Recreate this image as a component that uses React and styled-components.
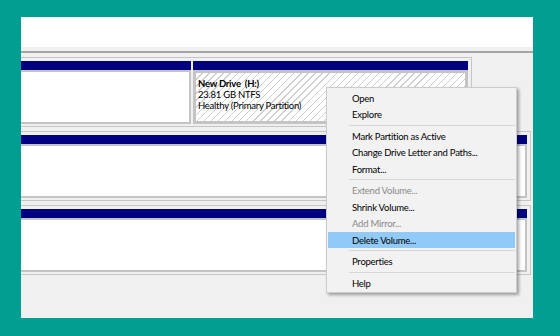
import styled, { createGlobalStyle } from "styled-components";

const GlobalStyle = createGlobalStyle`
  html, body {
    margin: 0;
    padding: 0;
    background: #009f91;
  }
  body {
    font-family: Lato, "Noto Sans", sans-serif;
  }
`;

const Stage = styled.div`
  width: 560px;
  height: 336px;
  box-sizing: border-box;
  padding: 17px 0 0 21px;
  background: #009f91;
`;

const Window = styled.div`
  position: relative;
  width: 512px;
  height: 301px;
  background: #f0f0f0;
  display: flex;
  flex-direction: column;
  overflow: hidden;
`;

const TopPane = styled.div`
  height: 30px;
  background: #ffffff;
`;

const Splitter = styled.div`
  height: 4px;
  background: #f0f0f0;
  border-bottom: 2px solid #a5a5a5;
`;

const DiskRow = styled.div`
  padding: 4px 2px 0 0;
`;

const DiskBox = styled.div`
  width: ${(p) => p.$width || "auto"};
  box-sizing: border-box;
  border: 1px solid #c6c6c6;
  border-left: none;
  padding: 3px 3px 2px 0;
  display: flex;
  gap: 2px;
`;

const Partition = styled.div`
  flex: ${(p) => (p.$width ? `0 0 ${p.$width}` : "1")};
  display: flex;
  flex-direction: column;
`;

const Bar = styled.div`
  height: 9px;
  background: #000080;
`;

const Body = styled.div`
  height: 54px;
  box-sizing: border-box;
  border: ${(p) => (p.$selected ? "3px solid #c4c4c4" : "2px solid #c4c4c4")};
  border-left-width: ${(p) => (p.$cut ? "0" : p.$selected ? "3px" : "2px")};
  background: ${(p) =>
    p.$selected
      ? "repeating-linear-gradient(135deg, #ffffff 0 4px, #cfcfcf 4px 5px)"
      : "#ffffff"};
  padding: 5px 2px 2px;
  font-size: 9.5px;
  letter-spacing: -0.25px;
  line-height: 11px;
  color: #000;
`;

const Label = styled.div`
  white-space: pre;
  font-weight: ${(p) => (p.$bold ? 700 : 400)};
`;

const Menu = styled.div`
  position: absolute;
  left: 305px;
  top: 70px;
  width: 191px;
  box-sizing: border-box;
  background: #f2f2f2;
  border: 1px solid #cccccc;
  padding: 1.5px 1px 1px;
  box-shadow: 2px 2px 3px rgba(0, 0, 0, 0.35);
  font-size: 9.5px;
  letter-spacing: -0.25px;
`;

const Item = styled.div`
  height: 16.5px;
  line-height: 17px;
  padding-left: 24px;
  color: ${(p) => (p.$disabled ? "#8a8a8a" : "#000")};
  background: ${(p) => (p.$active ? "#91c9f7" : "transparent")};
  white-space: nowrap;
`;

const Separator = styled.div`
  height: 1px;
  margin: 2px 0 2px 21px;
  background: #d7d7d7;
`;

const menu = [
  { label: "Open" },
  { label: "Explore" },
  { sep: true },
  { label: "Mark Partition as Active" },
  { label: "Change Drive Letter and Paths..." },
  { label: "Format..." },
  { sep: true },
  { label: "Extend Volume...", disabled: true },
  { label: "Shrink Volume..." },
  { label: "Add Mirror...", disabled: true },
  { label: "Delete Volume...", active: true },
  { sep: true },
  { label: "Properties" },
  { sep: true },
  { label: "Help" },
];

export default function App() {
  return (
    <Stage>
      <GlobalStyle />
      <Window>
        <TopPane />
        <Splitter />
        <DiskRow>
          <DiskBox $width="451px">
            <Partition $width="170px">
              <Bar />
              <Body $cut />
            </Partition>
            <Partition>
              <Bar />
              <Body $selected>
                <Label $bold>New Drive  (H:)</Label>
                <Label>23.81 GB NTFS</Label>
                <Label>Healthy (Primary Partition)</Label>
              </Body>
            </Partition>
          </DiskBox>
        </DiskRow>
        <DiskRow>
          <DiskBox>
            <Partition>
              <Bar />
              <Body $cut />
            </Partition>
          </DiskBox>
        </DiskRow>
        <DiskRow>
          <DiskBox>
            <Partition>
              <Bar />
              <Body $cut />
            </Partition>
          </DiskBox>
        </DiskRow>

        <Menu>
          {menu.map((m, i) =>
            m.sep ? (
              <Separator key={i} />
            ) : (
              <Item key={i} $disabled={m.disabled} $active={m.active}>
                {m.label}
              </Item>
            )
          )}
        </Menu>
      </Window>
    </Stage>
  );
}
